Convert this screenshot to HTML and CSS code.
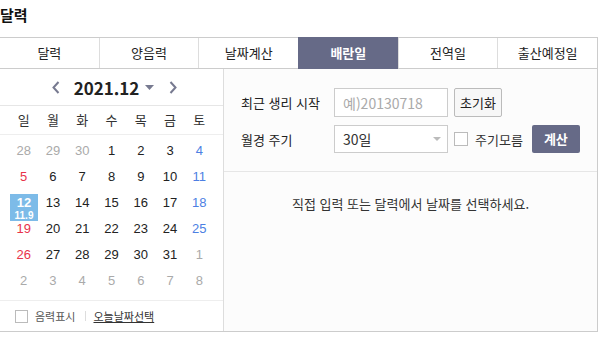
FILE: index.html
```html
<!DOCTYPE html>
<html lang="ko">

<head>
    <meta charset="UTF-8" />
    <title>달력</title>
    <link rel="stylesheet" href="styles.css">
</head>

<body>
    <h2 class="title">달력</h2>

    <div class="box">
        <ul class="tabs">
            <li class="tab">달력</li>
            <li class="tab">양음력</li>
            <li class="tab">날짜계산</li>
            <li class="tab on">배란일</li>
            <li class="tab">전역일</li>
            <li class="tab">출산예정일</li>
        </ul>

        <div class="body">
            <div class="cal">
                <div class="month-nav">
                    <svg class="arrow" width="8" height="13" viewBox="0 0 8 13"><path d="M6.5 1 L1.5 6.5 L6.5 12" fill="none" stroke="#777a90" stroke-width="2"/></svg>
                    <span class="month">2021.12</span>
                    <svg class="caret" width="9" height="5" viewBox="0 0 9 5"><path d="M0 0 H9 L4.5 5 Z" fill="#777a90"/></svg>
                    <svg class="arrow" width="8" height="13" viewBox="0 0 8 13"><path d="M1.5 1 L6.5 6.5 L1.5 12" fill="none" stroke="#777a90" stroke-width="2"/></svg>
                </div>

                <div class="week">
                    <span>일</span><span>월</span><span>화</span><span>수</span><span>목</span><span>금</span><span>토</span>
                </div>

                <div class="days">
                    <span class="off">28</span><span class="off">29</span><span class="off">30</span><span>1</span><span>2</span><span>3</span><span class="sat">4</span>
                    <span class="sun">5</span><span>6</span><span>7</span><span>8</span><span>9</span><span>10</span><span class="sat">11</span>
                    <span class="today"><b>12</b><small>11.9</small></span><span>13</span><span>14</span><span>15</span><span>16</span><span>17</span><span class="sat">18</span>
                    <span class="sun">19</span><span>20</span><span>21</span><span>22</span><span>23</span><span>24</span><span class="sat">25</span>
                    <span class="sun">26</span><span>27</span><span>28</span><span>29</span><span>30</span><span>31</span><span class="off">1</span>
                    <span class="off">2</span><span class="off">3</span><span class="off">4</span><span class="off">5</span><span class="off">6</span><span class="off">7</span><span class="off">8</span>
                </div>

                <div class="cal-foot">
                    <label class="check"><i class="box-ico"></i>음력표시</label>
                    <span class="bar"></span>
                    <a class="today-link">오늘날짜선택</a>
                </div>
            </div>

            <div class="side">
                <div class="form">
                    <div class="row">
                        <span class="label">최근 생리 시작</span>
                        <span class="input placeholder">예)20130718</span>
                        <span class="btn">초기화</span>
                    </div>
                    <div class="row">
                        <span class="label">월경 주기</span>
                        <span class="input select">30일
                            <svg width="8" height="4" viewBox="0 0 8 4"><path d="M0 0 H8 L4 4 Z" fill="#bbb"/></svg>
                        </span>
                        <label class="check"><i class="box-ico"></i>주기모름</label>
                        <span class="btn calc">계산</span>
                    </div>
                </div>
                <p class="msg">직접 입력 또는 달력에서 날짜를 선택하세요.</p>
            </div>
        </div>
    </div>
</body>

</html>
```

FILE: styles.css
```css
body {
    margin: 0;
    background: #fff;
    color: #222;
    font-family: "Noto Sans CJK KR", "Noto Sans", sans-serif;
}

.title {
    margin: 0;
    padding-top: 6px;
    height: 31px;
    font-size: 15px;
    line-height: 18px;
    font-weight: bold;
    color: #111;
}

.box {
    width: 597px;
    border-right: 1px solid #ccc;
    border-bottom: 1px solid #ccc;
}

.tabs {
    display: flex;
    margin: 0;
    padding: 0;
    list-style: none;
    height: 30px;
    border-top: 1px solid #ccc;
    border-bottom: 1px solid #ccc;
}

.tab {
    flex: 1;
    text-align: center;
    font-size: 13px;
    line-height: 30px;
    color: #222;
    border-left: 1px solid #ddd;
}

.tab:first-child {
    border-left: 0;
}

.tab.on {
    margin: -1px 0;
    line-height: 32px;
    background: #666a87;
    border-left-color: #666a87;
    color: #fff;
    font-weight: bold;
}

.body {
    display: flex;
    height: 262px;
}

/* calendar */

.cal {
    width: 223px;
    border-right: 1px solid #ddd;
}

.month-nav {
    height: 36px;
    display: flex;
    align-items: center;
    justify-content: center;
    padding-left: 6px;
    border-bottom: 1px solid #e6e6e6;
}

.month {
    margin: 0 6px 0 14px;
    font-size: 17px;
    font-weight: bold;
    color: #222;
}

.caret {
    margin-right: 15px;
    margin-top: 1px;
}

.week,
.days {
    display: grid;
    grid-template-columns: repeat(7, 1fr);
    padding: 0 9px;
    text-align: center;
    font-size: 13px;
}

.week {
    height: 28px;
    line-height: 28px;
    color: #333;
    border-bottom: 1px solid #eee;
}

.days {
    grid-auto-rows: 26px;
    height: 156px;
    padding-top: 3px;
    padding-bottom: 6px;
    line-height: 26px;
    font-family: "Liberation Sans", sans-serif;
    color: #222;
    border-bottom: 1px solid #eee;
}

.days .off {
    color: #aaa;
}

.days .sun {
    color: #e8334a;
}

.days .sat {
    color: #4d7fe3;
}

.days .today {
    display: flex;
    flex-direction: column;
    width: 28px;
    height: 27px;
    margin: 4px 0 0 1px;
    background: #7dbbe8;
    color: #fff;
    font-weight: bold;
}

.today b {
    font-size: 13px;
    line-height: 15px;
    margin-top: 1px;
}

.today small {
    font-size: 10px;
    line-height: 11px;
}

.cal-foot {
    display: flex;
    align-items: center;
    height: 30px;
    padding-left: 15px;
    font-size: 11px;
    color: #555;
}

.check {
    display: flex;
    align-items: center;
}

.box-ico {
    width: 11px;
    height: 11px;
    margin-right: 7px;
    border: 1px solid #bbb;
    background: #fff;
}

.bar {
    width: 1px;
    height: 10px;
    margin: 0 7px 0 10px;
    background: #ddd;
}

.today-link {
    color: #333;
    text-decoration: underline;
}

/* form */

.side {
    flex: 1;
    background: #fcfcfc;
}

.form {
    display: flex;
    flex-direction: column;
    gap: 8px;
    padding: 19px 0 18px 17px;
    border-bottom: 1px solid #e6e6e6;
}

.row {
    display: flex;
    align-items: center;
    font-size: 13px;
}

.label {
    width: 93px;
    color: #222;
}

.input {
    box-sizing: border-box;
    display: flex;
    align-items: center;
    justify-content: space-between;
    width: 114px;
    height: 29px;
    padding: 0 8px;
    border: 1px solid #ccc;
    background: #fff;
    font-size: 14px;
    color: #333;
}

.input.placeholder {
    color: #aaa;
}

.input.select {
    height: 28px;
    padding-right: 6px;
}

.btn {
    box-sizing: border-box;
    width: 48px;
    height: 29px;
    margin-left: 6px;
    border: 1px solid #bbb;
    border-radius: 2px;
    background: #f7f7f7;
    text-align: center;
    line-height: 27px;
    font-size: 13px;
    color: #222;
}

.row .check {
    margin-left: 6px;
    font-size: 13px;
    color: #333;
}

.row .check .box-ico {
    width: 12px;
    height: 12px;
    margin-right: 7px;
}

.btn.calc {
    height: 28px;
    margin-left: 9px;
    border: 0;
    background: #666a87;
    color: #fff;
    font-weight: bold;
    line-height: 28px;
}

.msg {
    margin: 0;
    padding-top: 24px;
    text-align: center;
    font-size: 13px;
    line-height: 16px;
    color: #333;
}
```
